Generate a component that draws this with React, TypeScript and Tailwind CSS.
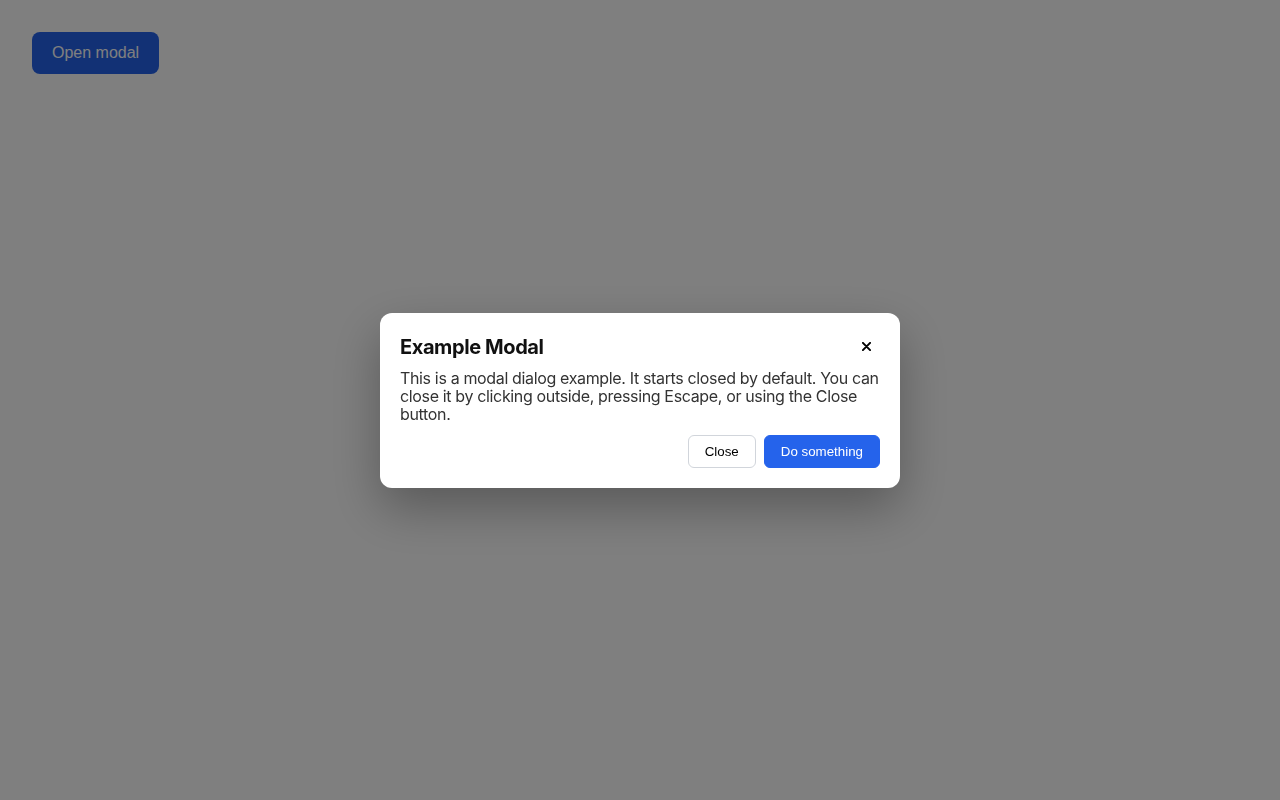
import { useState } from "react";

function App() {
  const [open, setOpen] = useState(true);

  return (
    <div className="min-h-screen bg-white p-8" style={{ fontFamily: "Inter, 'Noto Sans', sans-serif" }}>
      <button
        onClick={() => setOpen(true)}
        className="bg-[#2563eb] text-white rounded-lg px-5 py-3 text-base leading-[18px] font-['Liberation_Sans',Arial,sans-serif]"
      >
        Open modal
      </button>

      {open && (
        <div
          className="fixed inset-0 bg-black/50 flex items-center justify-center"
          onClick={() => setOpen(false)}
        >
          <div
            className="w-[520px] bg-white rounded-xl p-5 shadow-[0_20px_50px_rgba(0,0,0,0.3)]"
            onClick={(e) => e.stopPropagation()}
          >
            <div className="flex items-center justify-between">
              <h2 className="text-xl leading-7 font-bold text-[#111] tracking-[-0.4px]">Example Modal</h2>
              <button
                onClick={() => setOpen(false)}
                className="w-6 h-6 mr-0.5 flex items-center justify-center text-black"
                aria-label="Close"
              >
                <svg width="9" height="9" viewBox="0 0 10 10">
                  <path d="M1 1L9 9M9 1L1 9" stroke="currentColor" strokeWidth="2.2" strokeLinecap="round" />
                </svg>
              </button>
            </div>
            <p className="mt-2 text-base leading-[18px] text-[#333] tracking-[-0.35px]">
              This is a modal dialog example. It starts closed by default. You can close it by clicking
              outside, pressing Escape, or using the Close button.
            </p>
            <div className="mt-3 flex justify-end gap-2 font-['Liberation_Sans',Arial,sans-serif] text-[13.33px]">
              <button
                onClick={() => setOpen(false)}
                className="border border-[#d1d5db] rounded-md px-4 py-2 leading-[15px] text-black bg-white"
              >
                Close
              </button>
              <button className="border border-[#2563eb] bg-[#2563eb] text-white rounded-md px-4 py-2 leading-[15px]">
                Do something
              </button>
            </div>
          </div>
        </div>
      )}
    </div>
  );
}

export default App;
